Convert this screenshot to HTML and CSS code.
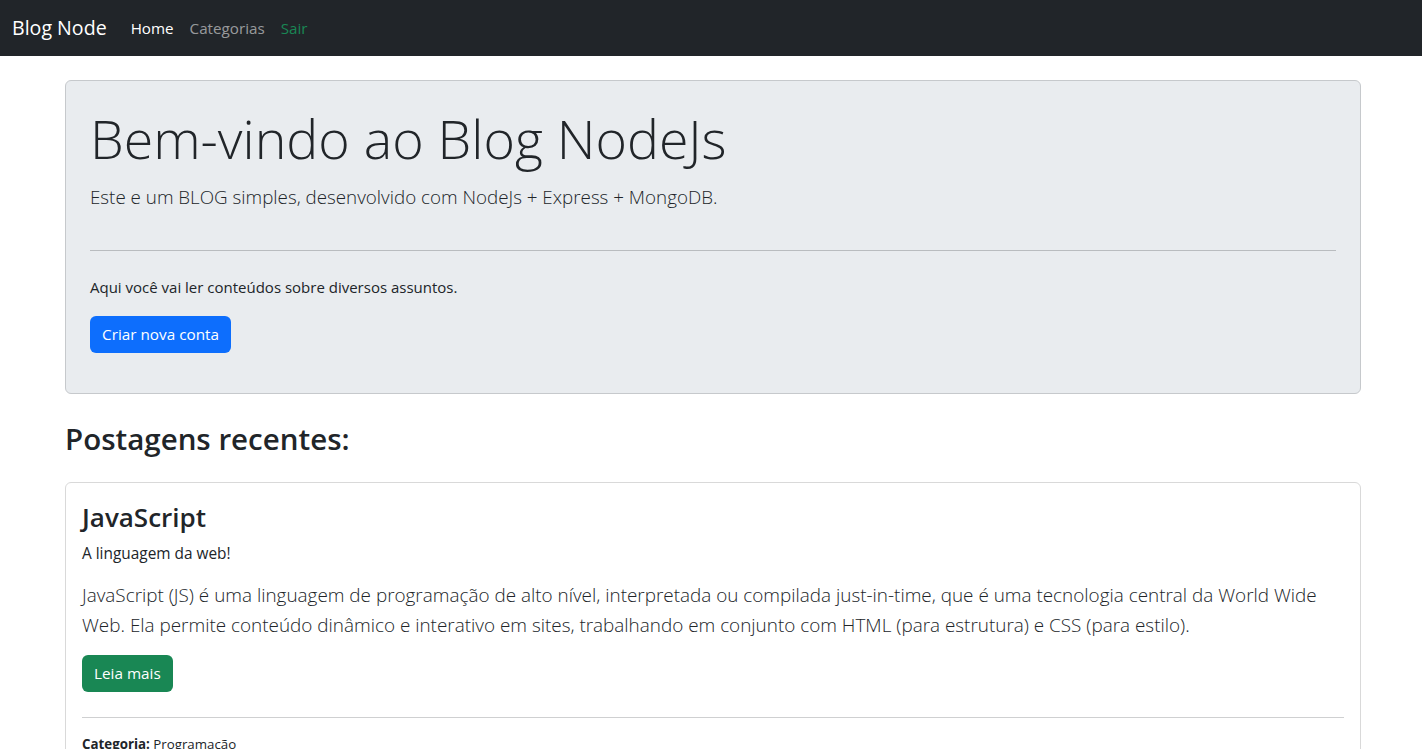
FILE: index.html
```html
<!DOCTYPE html>
<html lang="pt-BR">
<head>
<meta charset="utf-8">
<title>Blog Node</title>
<link rel="stylesheet" href="styles.css">
</head>
<body>
<nav class="navbar">
  <a class="brand" href="#">Blog Node</a>
  <ul class="nav">
    <li><a class="nav-link active" href="#">Home</a></li>
    <li><a class="nav-link" href="#">Categorias</a></li>
    <li><a class="nav-link success" href="#">Sair</a></li>
  </ul>
</nav>
<main class="container">
  <section class="jumbotron">
    <h1 class="display">Bem-vindo ao Blog NodeJs</h1>
    <p class="lead">Este e um BLOG simples, desenvolvido com NodeJs + Express + MongoDB.</p>
    <hr class="divider">
    <p class="intro">Aqui você vai ler conteúdos sobre diversos assuntos.</p>
    <a class="btn btn-primary" href="#">Criar nova conta</a>
  </section>
  <h2 class="section-title">Postagens recentes:</h2>
  <article class="card">
    <h3 class="card-title">JavaScript</h3>
    <p class="card-subtitle">A linguagem da web!</p>
    <p class="card-lead">JavaScript (JS) é uma linguagem de programação de alto nível, interpretada ou compilada just-in-time, que é uma tecnologia central da World Wide Web. Ela permite conteúdo dinâmico e interativo em sites, trabalhando em conjunto com HTML (para estrutura) e CSS (para estilo).</p>
    <a class="btn btn-success" href="#">Leia mais</a>
    <hr class="card-divider">
    <p class="meta"><b>Categoria:</b> Programação</p>
  </article>
</main>
</body>
</html>
```
FILE: styles.css
```css
* { box-sizing: border-box; }
html, body { margin: 0; padding: 0; }
body {
  font-family: "Open Sans", "Noto Sans", sans-serif;
  font-size: 15px;
  line-height: 24px;
  color: #212529;
  background: #fff;
}
a { text-decoration: none; }

.navbar {
  height: 56px;
  background: #212529;
  display: flex;
  align-items: center;
  padding: 0 12px;
}
.brand {
  color: #fff;
  font-size: 19.6px;
  margin-right: 16px;
  line-height: 30px;
}
.nav {
  display: flex;
  list-style: none;
  margin: 0;
  padding: 0;
}
.nav-link {
  display: block;
  padding: 8px;
  font-size: 15.2px;
  color: rgba(255,255,255,.55);
}
.nav-link.active { color: #fff; }
.nav-link.success { color: #198754; }

.container {
  width: 1296px;
  margin: 0 0 0 65px;
}
.jumbotron {
  margin-top: 24px;
  background: #e9ecef;
  border: 1px solid #c6c9cc;
  border-radius: 6px;
  padding: 24px 24px 24px 24px;
}
.display {
  font-size: 53.7px;
  font-weight: 300;
  line-height: 67px;
  margin: 0 0 10px;
}
.lead {
  font-size: 18.8px;
  font-weight: 300;
  line-height: 30px;
  margin: 0 0 38px;
}
.divider {
  border: 0;
  border-top: 1px solid #b9bcbf;
  margin: 24px 0;
}
.intro { margin: 0 0 17px; }
.btn {
  display: inline-block;
  padding: 6px 12px;
  font-size: 15.3px;
  line-height: 25px;
  color: #fff;
  border-radius: 6px;
}
.btn-primary { background: #0d6efd; margin-bottom: 16px; }
.btn-success { background: #198754; }

.section-title {
  font-size: 29.5px;
  font-weight: 600;
  line-height: 38px;
  margin: 26px 0 24px;
}
.card {
  border: 1px solid #d9d9d9;
  border-radius: 6px;
  padding: 17px 16px 16px;
}
.card-title {
  font-size: 26px;
  font-weight: 600;
  line-height: 34px;
  margin: 0 0 8px;
}
.card-subtitle {
  font-size: 15.4px;
  margin: 0 0 14px;
}
.card-lead {
  font-size: 18.9px;
  font-weight: 300;
  line-height: 30px;
  margin: 0 0 15px;
}
.card-divider {
  border: 0;
  border-top: 1px solid #cfd0d1;
  margin: 25px 0 16px;
}
.meta { font-size: 13.3px; margin: 0; line-height: 21px; }
```
